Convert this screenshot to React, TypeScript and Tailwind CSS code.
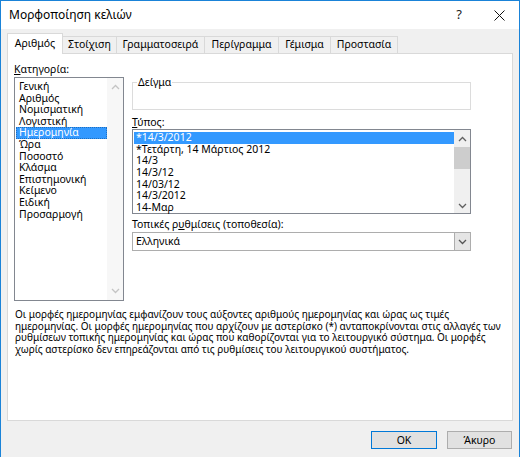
import React from "react";

const font = { fontFamily: '"Noto Sans", "DejaVu Sans", sans-serif' };

function ChevronUp({ color = "#606060" }: { color?: string }) {
  return (
    <svg width="9" height="6" viewBox="0 0 9 6">
      <path d="M1 5 L4.5 1.5 L8 5" fill="none" stroke={color} strokeWidth="1.3" />
    </svg>
  );
}

function ChevronDown({ color = "#606060" }: { color?: string }) {
  return (
    <svg width="9" height="6" viewBox="0 0 9 6">
      <path d="M1 1 L4.5 4.5 L8 1" fill="none" stroke={color} strokeWidth="1.3" />
    </svg>
  );
}

const categories = [
  "Γενική",
  "Αριθμός",
  "Νομισματική",
  "Λογιστική",
  "Ημερομηνία",
  "Ώρα",
  "Ποσοστό",
  "Κλάσμα",
  "Επιστημονική",
  "Κείμενο",
  "Ειδική",
  "Προσαρμογή",
];

const types = [
  "*14/3/2012",
  "*Τετάρτη, 14 Μάρτιος 2012",
  "14/3",
  "14/3/12",
  "14/03/12",
  "14/3/2012",
  "14-Μαρ",
];

const tabs: { label: string; w: string }[] = [
  { label: "Αριθμός", w: "w-[56px]" },
  { label: "Στοίχιση", w: "w-[54px]" },
  { label: "Γραμματοσειρά", w: "w-[88px]" },
  { label: "Περίγραμμα", w: "w-[74px]" },
  { label: "Γέμισμα", w: "w-[52px]" },
  { label: "Προστασία", w: "w-[67px]" },
];

export default function App() {
  return (
    <div
      className="w-[520px] h-[457px] bg-[#f0f0f0] border-x border-t border-[#1a83d8] flex flex-col text-[10.5px] text-black overflow-hidden"
      style={font}
    >
      {/* title bar */}
      <div className="h-[28px] bg-white flex items-center justify-between pl-[8px] pr-[14px] shrink-0">
        <span className="text-[12px]">Μορφοποίηση κελιών</span>
        <div className="flex items-center gap-[32px]">
          <span className="text-[13px] text-[#222]">?</span>
          <svg width="11" height="11" viewBox="0 0 11 11">
            <path d="M0.5 0.5 L10.5 10.5 M10.5 0.5 L0.5 10.5" stroke="#111" strokeWidth="1" />
          </svg>
        </div>
      </div>

      {/* tab strip */}
      <div className="flex items-end pl-[6px] mt-[4px] h-[20px] shrink-0 relative z-10">
        {tabs.map((t, i) =>
          i === 0 ? (
            <div
              key={t.label}
              className={
                t.w +
                " h-[21px] bg-white border border-b-0 border-[#d9d9d9] flex items-center justify-center text-[10.5px] -mb-px"
              }
            >
              {t.label}
            </div>
          ) : (
            <div
              key={t.label}
              className={
                t.w +
                " h-[17px] bg-[#f0f0f0] border border-l-0 border-b-0 border-[#d9d9d9] flex items-center justify-center text-[10.5px]"
              }
            >
              {t.label}
            </div>
          )
        )}
      </div>

      {/* tab page */}
      <div className="mx-[6px] h-[368px] bg-white border border-[#d9d9d9] shrink-0 flex flex-col px-[6px] pt-[8px]">
        <div className="flex gap-[8px]">
          {/* category column */}
          <div className="w-[110px] flex flex-col">
            <div className="h-[14px] leading-[14px]">
              <span className="underline underline-offset-1">Κ</span>ατηγορία:
            </div>
            <div className="mt-[1px] h-[224px] border border-[#828790] flex">
              <div className="flex-1 flex flex-col pt-[3px] pl-[1px]">
                {categories.map((c) => (
                  <div
                    key={c}
                    className={
                      "h-[11.6px] leading-[11.6px] pl-[3px] " +
                      (c === "Ημερομηνία"
                        ? "bg-[#3399ff] text-white outline-1 outline-dotted outline-[#1f6fc0] -outline-offset-1"
                        : "")
                    }
                  >
                    {c}
                  </div>
                ))}
              </div>
              <div className="w-[16px] bg-[#f7f7f7] flex flex-col items-center justify-between py-[6px]">
                <ChevronUp color="#c4c4c4" />
                <ChevronDown color="#c4c4c4" />
              </div>
            </div>
          </div>

          {/* format details */}
          <div className="w-[339px] flex flex-col">
            <div className="relative mt-[20px] h-[28px] border border-[#dcdcdc]">
              <span className="absolute left-[4px] -top-[8px] bg-white px-[1px] leading-[14px]">Δείγμα</span>
            </div>

            <div className="mt-[5px] h-[14px] leading-[14px]">
              <span className="underline underline-offset-1">Τ</span>ύπος:
            </div>
            <div className="h-[85px] border border-[#828790] flex">
              <div className="flex-1 flex flex-col pt-[2px] pl-[1px]">
                {types.map((t, i) => (
                  <div
                    key={t}
                    className={
                      "h-[11.7px] leading-[11.7px] pl-[2px] " + (i === 0 ? "bg-[#3399ff] text-white" : "")
                    }
                  >
                    {t}
                  </div>
                ))}
              </div>
              <div className="w-[16px] bg-[#f0f0f0] flex flex-col items-center">
                <div className="h-[17px] flex items-center justify-center">
                  <ChevronUp />
                </div>
                <div className="w-full h-[22px] bg-[#cdcdcd]" />
                <div className="flex-1" />
                <div className="h-[14px] flex items-center justify-center">
                  <ChevronDown />
                </div>
              </div>
            </div>

            <div className="mt-[3px] h-[14px] leading-[14px]">
              Τοπικές ρ<span className="underline underline-offset-1">υ</span>θμίσεις (τοποθεσία):
            </div>
            <div className="mt-[1px] h-[19px] border border-[#adadad] flex items-center bg-white">
              <span className="flex-1 pl-[3px]">Ελληνικά</span>
              <div className="w-[16px] h-full bg-[#e5e5e5] border-l border-[#adadad] flex items-center justify-center">
                <ChevronDown color="#555" />
              </div>
            </div>
          </div>
        </div>

        {/* description */}
        <p className="mt-[8px] pl-[1px] leading-[11.7px] text-[10px] whitespace-nowrap">
          Οι μορφές ημερομηνίας εμφανίζουν τους αύξοντες αριθμούς ημερομηνίας και ώρας ως τιμές
          <br />
          ημερομηνίας. Οι μορφές ημερομηνίας που αρχίζουν με αστερίσκο (*) ανταποκρίνονται στις αλλαγές των
          <br />
          ρυθμίσεων τοπικής ημερομηνίας και ώρας που καθορίζονται για το λειτουργικό σύστημα. Οι μορφές
          <br />
          χωρίς αστερίσκο δεν επηρεάζονται από τις ρυθμίσεις του λειτουργικού συστήματος.
        </p>
      </div>

      {/* dialog buttons */}
      <div className="flex justify-end gap-[10px] pr-[7px] mt-[10px]">
        <button className="w-[66px] h-[18px] bg-[#e1e1e1] border border-[#0078d7] text-[10.5px] leading-none">
          OK
        </button>
        <button className="w-[65px] h-[18px] bg-[#e1e1e1] border border-[#adadad] text-[10.5px] leading-none">
          Άκυρο
        </button>
      </div>
    </div>
  );
}
